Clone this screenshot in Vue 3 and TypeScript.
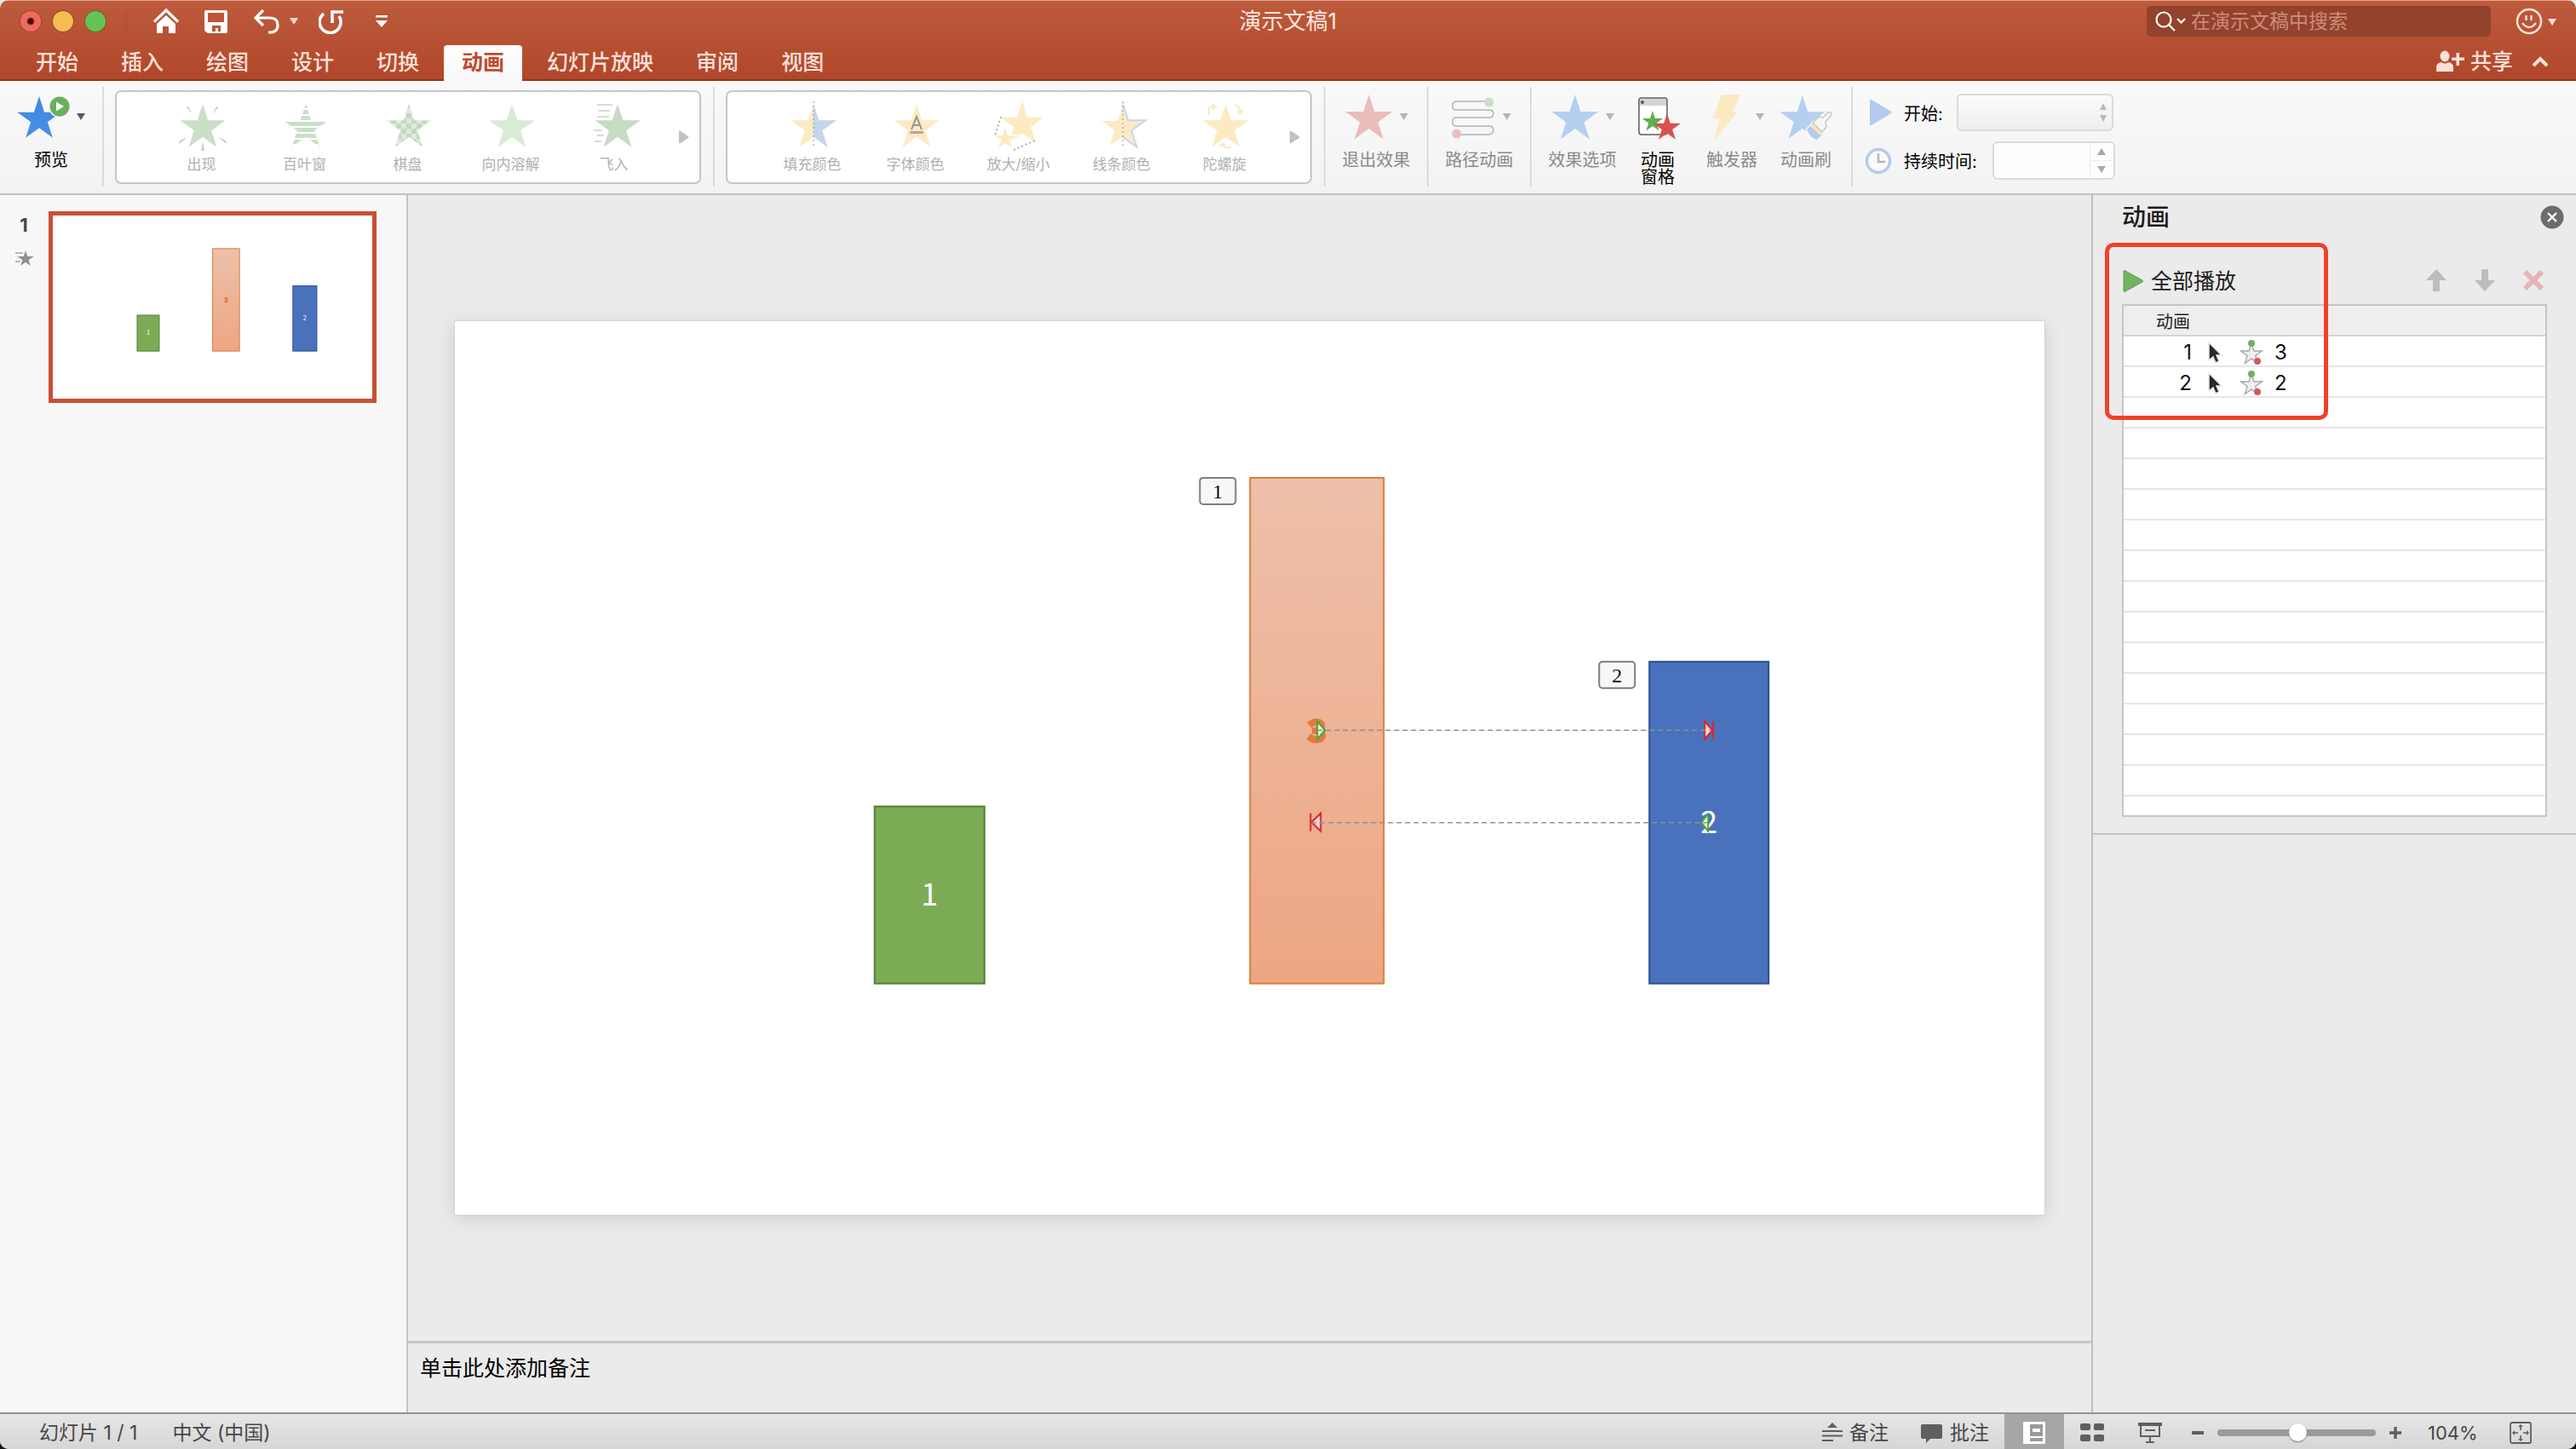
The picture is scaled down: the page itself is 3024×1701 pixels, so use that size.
<script setup lang="ts">
import { ref } from 'vue'

interface Bar {
  label: string
  x: number
  y: number
  w: number
  h: number
  fill: string
  stroke: string
  color: string
  size: number
  weight: number
  outline: number
  labelY: number
}

const tabs = ['开始', '插入', '绘图', '设计', '切换', '动画', '幻灯片放映', '审阅', '视图']
const activeTab = ref('动画')
const search = ref('')
const duration = ref('')
const zoom = ref(51)

const entrance = [
  { kind: 'appear', label: '出现' },
  { kind: 'blinds', label: '百叶窗' },
  { kind: 'checker', label: '棋盘' },
  { kind: 'dissolve', label: '向内溶解' },
  { kind: 'fly', label: '飞入' },
]

const emphasis = [
  { kind: 'fill', label: '填充颜色' },
  { kind: 'font', label: '字体颜色' },
  { kind: 'scale', label: '放大/缩小' },
  { kind: 'line', label: '线条颜色' },
  { kind: 'spin', label: '陀螺旋' },
]

const galleries = [
  { name: '进入效果', items: entrance },
  { name: '强调效果', items: emphasis },
]

const steps = [
  { order: 1, target: '3' },
  { order: 2, target: '2' },
]

const bars: Bar[] = [
  { label: '1', x: 493, y: 570, w: 129, h: 208, fill: '#7cab55', stroke: '#507e32', color: '#ffffff', size: 36, weight: 400, outline: 0, labelY: 686 },
  { label: '3', x: 934, y: 184, w: 157, h: 594, fill: 'url(#peach)', stroke: '#d97c3c', color: '#e07c42', size: 36, weight: 900, outline: 3, labelY: 494 },
  { label: '2', x: 1403, y: 400, w: 140, h: 378, fill: '#4a72bc', stroke: '#2c4f8c', color: '#ffffff', size: 36, weight: 400, outline: 0, labelY: 601 },
]

function star(cx: number, cy: number, r: number): string {
  const points: string[] = []
  for (let i = 0; i < 10; i++) {
    const radius = i % 2 === 0 ? r : r * 0.382
    const angle = (Math.PI / 5) * i - Math.PI / 2
    points.push(`${(cx + radius * Math.cos(angle)).toFixed(2)},${(cy + radius * Math.sin(angle)).toFixed(2)}`)
  }
  return points.join(' ')
}
</script>

<template>
  <div class="window">
    <svg class="defs" aria-hidden="true">
      <defs>
        <linearGradient id="peach" x1="0" y1="0" x2="0" y2="1">
          <stop offset="0" stop-color="#eec0aa" />
          <stop offset="1" stop-color="#eda683" />
        </linearGradient>
        <linearGradient id="azure" x1="0" y1="0" x2="0" y2="1">
          <stop offset="0" stop-color="#3f86df" />
          <stop offset="1" stop-color="#4a90e8" />
        </linearGradient>
        <pattern id="stripes" width="8" height="7" patternUnits="userSpaceOnUse">
          <rect width="8" height="5" fill="#cadfc8" />
        </pattern>
        <pattern id="checks" width="12" height="12" patternUnits="userSpaceOnUse">
          <rect width="12" height="12" fill="#dfeadd" />
          <rect width="6" height="6" fill="#c3d8c1" />
          <rect x="6" y="6" width="6" height="6" fill="#c3d8c1" />
        </pattern>
        <clipPath id="right-half"><rect x="33" y="0" width="31" height="64" /></clipPath>
      </defs>
    </svg>

    <header class="header">
      <div class="title-row">
        <div class="quick">
          <button class="light close" aria-label="关闭"></button>
          <button class="light mini" aria-label="最小化"></button>
          <button class="light full" aria-label="全屏"></button>
          <i class="quick-sep"></i>
          <button class="q-home" aria-label="主页">
            <svg width="30" height="30" viewBox="0 0 30 30">
              <path d="M1 15.500 15 2l14 13.500" fill="none" stroke="#fff" stroke-width="3.200" />
              <path d="M15 8 4 18v11h7v-8h7v8h8V18z" fill="#fff" />
            </svg>
          </button>
          <button class="q-save" aria-label="保存">
            <svg width="30" height="30" viewBox="0 0 30 30">
              <path fill="#fff" fill-rule="evenodd" d="M3 2h23q2 0 2 2v23q0 2-2 2H5l-4-3V4q0-2 2-2zm2 3v11h19V5zm5 15v7h4v-4h3v4h3v-7z" />
            </svg>
          </button>
          <button class="q-undo" aria-label="撤消">
            <svg width="30" height="30" viewBox="0 0 30 30">
              <path d="M11 2 2 11l9 9M3 11h16q9 0 9 8.500T19 28h-2" fill="none" stroke="#fff" stroke-width="3.200" />
            </svg>
          </button>
          <button class="q-caret" aria-label="撤消列表">
            <svg width="10" height="10" viewBox="0 0 10 10"><path d="M0 1h10L5 9z" fill="#f3d5cc" /></svg>
          </button>
          <button class="q-redo" aria-label="重复">
            <svg width="30" height="30" viewBox="0 0 30 30">
              <path d="M6 6a12.500 12.500 0 1 0 18 3" fill="none" stroke="#fff" stroke-width="3.600" />
              <path d="M16 17V4h13" fill="none" stroke="#fff" stroke-width="3.600" />
            </svg>
          </button>
          <button class="q-more" aria-label="自定义快速访问工具栏">
            <svg width="16" height="16" viewBox="0 0 16 16"><path d="M1 1h14v2.500H1zM1 7h14l-7 8z" fill="#fff" /></svg>
          </button>
        </div>
        <h1 class="doc-title">演示文稿1</h1>
        <div class="title-right">
          <label class="search">
            <svg width="36" height="26" viewBox="0 0 36 26" fill="none" stroke="#fff" stroke-width="2.200">
              <circle cx="10" cy="11" r="8.500" /><path d="m16 17 7 7" /><path d="m26 10 4.500 4.500L35 10" />
            </svg>
            <input v-model="search" type="search" placeholder="在演示文稿中搜索" aria-label="在演示文稿中搜索" />
          </label>
          <button class="smiley" aria-label="反馈">
            <svg width="50" height="32" viewBox="0 0 50 32">
              <circle cx="17" cy="16" r="14" fill="none" stroke="#fbe0d8" stroke-width="2.600" />
              <path d="M13.500 9v6M19.500 9v6M9 18q8 10 16 0" fill="none" stroke="#fbe0d8" stroke-width="2.400" />
              <path d="M39 13h10l-5 8z" fill="#fbe0d8" />
            </svg>
          </button>
        </div>
      </div>
      <nav class="tabs">
        <button
          v-for="tab in tabs"
          :key="tab"
          class="tab"
          :class="{ active: tab === activeTab }"
          @click="activeTab = tab"
        >{{ tab }}</button>
        <span class="grow"></span>
        <button class="share">
          <svg width="34" height="26" viewBox="0 0 34 26" fill="#fbe0d8">
            <ellipse cx="10" cy="7" rx="5.500" ry="6.500" /><path d="M0 25v-5q0-5 6-6 4 3 8 0 6 1 6 6v5zM18 8.500h5.500V3H27v5.500h6V12h-6v6h-3.500v-6H18z" />
          </svg>
          共享
        </button>
        <button class="fold" aria-label="折叠功能区">
          <svg width="20" height="14" viewBox="0 0 20 14"><path d="m2 12 8-8 8 8" fill="none" stroke="#fbe0d8" stroke-width="4" /></svg>
        </button>
      </nav>
    </header>

    <section class="ribbon">
      <button class="tool preview">
        <span class="tool-icon">
          <svg width="64" height="56" viewBox="0 0 64 56">
            <polygon :points="star(26, 31, 27)" fill="url(#azure)" />
            <circle cx="50" cy="16" r="13" fill="#f7f7f7" />
            <circle cx="50" cy="16" r="11.500" fill="#6bb05c" />
            <path d="M46 10.500v11l9-5.500z" fill="#fff" />
          </svg>
          <svg width="12" height="10" viewBox="0 0 12 10"><path d="M1 1h10L6 9z" fill="#5a5a5a" /></svg>
        </span>
        预览
      </button>
      <i class="sep"></i>

      <template v-for="gallery in galleries" :key="gallery.name">
        <div class="gallery" role="group" :aria-label="gallery.name">
          <button v-for="item in gallery.items" :key="item.kind" class="effect">
            <svg width="64" height="64" viewBox="0 0 64 64">
              <template v-if="item.kind === 'appear'">
                <polygon :points="star(33, 35, 28)" fill="#c9e0c6" />
                <path d="m14 11 2-1 5 9zM51 11l-2-1-4 9zM5 54l1-4 9-4zM61 54l-1-4-9-4zM31 62h4l-2-11z" fill="#bfd0bd" />
              </template>
              <polygon v-else-if="item.kind === 'blinds'" :points="star(33, 35, 28)" fill="url(#stripes)" />
              <polygon v-else-if="item.kind === 'checker'" :points="star(33, 35, 28)" fill="url(#checks)" />
              <polygon v-else-if="item.kind === 'dissolve'" :points="star(33, 35, 28)" fill="#d9ebd7" />
              <template v-else-if="item.kind === 'fly'">
                <polygon :points="star(36, 35, 28)" fill="#c6dcc4" />
                <path d="M12 8h18M13 15h14M12 22h14M8 38h10M12 44h8M9 51h8" stroke="#d5dcd4" stroke-width="2" />
              </template>
              <template v-else-if="item.kind === 'fill'">
                <polygon :points="star(33, 35, 28)" fill="#fcebc2" />
                <polygon :points="star(33, 35, 28)" fill="#c4d5ef" clip-path="url(#right-half)" />
                <path d="M33 4v54" stroke="#8f8f8f" stroke-dasharray="2 3" />
              </template>
              <template v-else-if="item.kind === 'font'">
                <polygon :points="star(33, 35, 28)" fill="#fcebc2" />
                <path d="m27 37 6-15 6 15M29 32h8" fill="none" stroke="#9a9290" stroke-width="2" />
                <path d="M25 39h16v3H25z" fill="#b9a59c" />
              </template>
              <template v-else-if="item.kind === 'scale'">
                <polygon :points="star(36, 31, 27)" fill="#fcebc2" />
                <polygon :points="star(16, 48, 16)" fill="#fff" />
                <polygon :points="star(16, 48, 13)" fill="#fcebc2" />
                <path d="M11 22 4 45M26 61l25-11" fill="none" stroke="#a9a9a9" stroke-width="2" stroke-dasharray="2 3" />
              </template>
              <template v-else-if="item.kind === 'line'">
                <polygon :points="star(33, 35, 26)" fill="#fcebc2" />
                <polygon :points="star(33, 35, 28)" fill="none" stroke="#c4d5ef" stroke-width="2" clip-path="url(#right-half)" />
                <path d="M33 4v54" stroke="#8f8f8f" stroke-dasharray="2 3" />
              </template>
              <template v-else>
                <polygon :points="star(33, 35, 28)" fill="#fcebc2" />
                <path d="M13 20v-7q0-3 8-3l-4-3m4 3-4 4M43 9q7-1 7 9l-4-3m4 3 3-4M39 58q-10 1-10-4l-3 3m3-3 4 1" fill="none" stroke="#f7e8c8" stroke-width="2" />
              </template>
            </svg>
            <span>{{ item.label }}</span>
          </button>
          <button class="gallery-more" aria-label="更多">
            <svg width="12" height="16" viewBox="0 0 12 16"><path d="M0 2q0-2 2-1l9 6q1 1 0 2l-9 6q-2 1-2-1z" fill="#c2c2c2" /></svg>
          </button>
        </div>
        <i class="sep"></i>
      </template>

      <button class="tool dim">
        <span class="tool-icon">
          <svg width="60" height="56" viewBox="0 0 60 56"><polygon :points="star(30, 31, 29)" fill="#ebbcbc" /></svg>
          <svg width="12" height="10" viewBox="0 0 12 10"><path d="M1 1h10L6 9z" fill="#b5b5b5" /></svg>
        </span>
        退出效果
      </button>
      <i class="sep"></i>
      <button class="tool dim">
        <span class="tool-icon">
          <svg width="60" height="56" viewBox="0 0 60 56">
            <path d="M48 10H12q-5 0-5 5t5 5h38q5 0 5 4.500T50 29H12q-5 0-5 5t5 5h38q5 0 5 4.500T50 49H12" fill="none" stroke="#b3b3b3" stroke-width="1.500" />
            <circle cx="50" cy="11" r="5.500" fill="#c9dfc6" /><circle cx="12" cy="48" r="5.500" fill="#e6c0c0" />
          </svg>
          <svg width="12" height="10" viewBox="0 0 12 10"><path d="M1 1h10L6 9z" fill="#b5b5b5" /></svg>
        </span>
        路径动画
      </button>
      <i class="sep"></i>
      <button class="tool dim">
        <span class="tool-icon">
          <svg width="60" height="56" viewBox="0 0 60 56"><polygon :points="star(30, 31, 29)" fill="#b5cff1" /></svg>
          <svg width="12" height="10" viewBox="0 0 12 10"><path d="M1 1h10L6 9z" fill="#b5b5b5" /></svg>
        </span>
        效果选项
      </button>
      <button class="tool narrow">
        <span class="tool-icon">
          <svg width="60" height="56" viewBox="0 0 60 56">
            <rect x="8" y="6" width="33" height="43" rx="3" fill="#fff" stroke="#5c5c5c" stroke-width="1.500" />
            <path d="M9 8q0-1 2-1h27q2 0 2 1v7H9z" fill="#d4d4d4" /><circle cx="12" cy="11" r="2" fill="#555" />
            <polygon :points="star(24, 34, 13)" fill="#5fae4f" /><polygon :points="star(41, 41, 17)" fill="#d8504f" />
          </svg>
        </span>
        动画<br />窗格
      </button>
      <button class="tool trigger dim">
        <span class="tool-icon">
          <svg width="60" height="56" viewBox="0 0 60 56"><path d="M26 2h22l-9 20h6L17 56l7-26h-8z" fill="#fbeac0" /></svg>
          <svg width="12" height="10" viewBox="0 0 12 10"><path d="M1 1h10L6 9z" fill="#b5b5b5" /></svg>
        </span>
        触发器
      </button>
      <button class="tool narrow dim">
        <span class="tool-icon">
          <svg width="64" height="56" viewBox="0 0 64 56">
            <polygon :points="star(28, 31, 28)" fill="#b5cff1" />
            <path d="m31 43 15-15 12 13-15 15z" fill="#f7f7f7" />
            <path d="m33 43 6-6 12 12-6 6q-7-1-12-12z" fill="#b3cdec" />
            <path d="m37 39 4-4 11 12-3 3z" fill="#fbe2bd" />
            <path d="m40 35 7-7 5 1 6-6q4-1 4 3l-7 8 1 6-5 6z" fill="#f6f6f6" stroke="#c5c5c5" stroke-width="1.500" />
          </svg>
        </span>
        动画刷
      </button>
      <i class="sep sep-last"></i>

      <form class="timing" @submit.prevent>
        <div class="timing-row">
          <svg width="32" height="32" viewBox="0 0 32 32"><path d="M6 2q0-2 2-1l23 14q1 1 0 2L8 31q-2 1-2-1z" fill="#b3cbef" /></svg>
          <label for="start">开始:</label>
          <div class="select-wrap">
            <select id="start" disabled><option></option></select>
            <svg width="10" height="24" viewBox="0 0 10 24"><path d="M5 1l4 8H1zM5 23l4-8H1z" fill="#b9b9b9" /></svg>
          </div>
        </div>
        <div class="timing-row">
          <svg width="32" height="32" viewBox="0 0 32 32">
            <circle cx="16" cy="16" r="13.500" fill="#fafafa" stroke="#b3cbef" stroke-width="3.400" /><path d="M16 7v10h8" fill="none" stroke="#b5b5b5" stroke-width="2.500" />
          </svg>
          <label for="duration">持续时间:</label>
          <div class="spin">
            <input id="duration" v-model="duration" type="text" />
            <div class="spin-buttons">
              <button type="button" aria-label="增加"><svg width="10" height="9" viewBox="0 0 10 9"><path d="M5 0l5 8H0z" fill="#a9a9a9" /></svg></button>
              <button type="button" aria-label="减少"><svg width="10" height="9" viewBox="0 0 10 9"><path d="M5 8l5-8H0z" fill="#a9a9a9" /></svg></button>
            </div>
          </div>
        </div>
      </form>
    </section>

    <main class="work">
      <aside class="thumbs">
        <div class="thumb-info">
          <strong>1</strong>
          <svg width="24" height="20" viewBox="0 0 24 20">
            <polygon :points="star(14, 11, 10)" fill="#8f8f8f" /><path d="M2 4h9M2 14h6" stroke="#a5a5a5" stroke-width="1.500" />
          </svg>
        </div>
        <button class="thumb" aria-label="幻灯片 1">
          <svg viewBox="0 -8 1867 1062" preserveAspectRatio="none">
            <g v-for="bar in bars" :key="bar.label">
              <rect :x="bar.x" :y="bar.y" :width="bar.w" :height="bar.h" :fill="bar.fill" :stroke="bar.stroke" stroke-width="5" />
              <text :x="bar.x + bar.w / 2" :y="bar.labelY" :fill="bar.color" :font-size="bar.size" :font-weight="bar.weight" :stroke="bar.color" :stroke-width="bar.outline" text-anchor="middle">{{ bar.label }}</text>
            </g>
          </svg>
        </button>
      </aside>

      <section class="editor">
        <div class="canvas">
          <svg class="slide" viewBox="0 0 1867 1050">
            <g v-for="bar in bars" :key="bar.label">
              <rect :x="bar.x" :y="bar.y" :width="bar.w" :height="bar.h" :fill="bar.fill" :stroke="bar.stroke" stroke-width="2" />
              <text :x="bar.x + bar.w / 2" :y="bar.labelY" :fill="bar.color" :font-size="bar.size" :font-weight="bar.weight" :stroke="bar.color" :stroke-width="bar.outline" text-anchor="middle">{{ bar.label }}</text>
            </g>
            <g stroke-width="2" stroke-linejoin="miter">
              <path d="M1013 470v21l9-10.500z" fill="#f0fae8" stroke="#4ba52e" />
              <path d="M1468 470v21l9-10.500zM1478 470v21" fill="#f6d4d6" stroke="#d8262c" />
              <path d="M1017 578v21l-11-10.500zM1005 578v21" fill="#f6d4d6" stroke="#d8262c" />
              <path d="M1472 579v20l-8-10z" fill="#f0fae8" stroke="#4ba52e" />
              <path d="M1013 480.500h462M1006 589h465" stroke="#8d9191" stroke-width="1.600" stroke-dasharray="6 4" />
            </g>
            <g class="order">
              <rect x="875" y="184" width="42" height="31" rx="4" /><text x="896" y="208">1</text>
              <rect x="1344" y="400" width="42" height="31" rx="4" /><text x="1365" y="424">2</text>
            </g>
          </svg>
        </div>
        <div class="notes">单击此处添加备注</div>
      </section>

      <aside class="pane">
        <div class="pane-body">
          <div class="pane-head">
            <h2>动画</h2>
            <button aria-label="关闭窗格">
              <svg width="28" height="28" viewBox="0 0 28 28"><circle cx="14" cy="14" r="13.500" fill="#6c6c6c" /><path d="m9 9 10 10M19 9 9 19" stroke="#fff" stroke-width="2.400" /></svg>
            </button>
          </div>
          <div class="pane-tools">
            <button class="play">
              <svg width="24" height="28" viewBox="0 0 24 28"><path d="M1 2q0-1 2 0l20 11q1 1 0 2L3 26q-2 1-2 0z" fill="#72b262" stroke="#5da04d" /></svg>
              全部播放
            </button>
            <span class="grow"></span>
            <button aria-label="上移"><svg width="24" height="28" viewBox="0 0 24 28"><path d="M12 1 0 14h8v13h8V14h8z" fill="#bdbdbd" /></svg></button>
            <button aria-label="下移"><svg width="24" height="28" viewBox="0 0 24 28"><path d="M12 27 0 14h8V1h8v13h8z" fill="#bdbdbd" /></svg></button>
            <button aria-label="删除"><svg width="24" height="28" viewBox="0 0 24 28"><path d="m2 4 20 20M22 4 2 24" stroke="#e8b3b5" stroke-width="6" /></svg></button>
          </div>
          <div class="list">
            <table>
              <thead><tr><th colspan="4">动画</th></tr></thead>
              <tbody>
                <tr v-for="step in steps" :key="step.order">
                  <td class="num">{{ step.order }}</td>
                  <td class="mouse">
                    <svg width="20" height="28" viewBox="0 0 20 28"><path d="M2 2v21l5-4 3 7 4-2-3-7h6z" fill="#2a2a2a" stroke="#e8e8e8" stroke-width="1.500" /></svg>
                  </td>
                  <td class="motion">
                    <svg width="28" height="32" viewBox="0 0 28 32">
                      <polygon :points="star(14, 18, 13)" fill="#eef1ef" stroke="#a5a8a6" stroke-width="1.400" />
                      <circle cx="14" cy="5" r="4" fill="#6eb25f" /><circle cx="21" cy="26" r="4" fill="#d25a60" />
                    </svg>
                  </td>
                  <td>{{ step.target }}</td>
                </tr>
              </tbody>
            </table>
          </div>
          <div class="callout"></div>
        </div>
      </aside>
    </main>

    <footer class="status">
      <span class="page">幻灯片 1 / 1</span>
      <span>中文 (中国)</span>
      <span class="grow"></span>
      <button class="s-notes">
        <svg width="24" height="26" viewBox="0 0 24 26" fill="#5f5f5f"><path d="m12 1 6 6H6zM0 10h24v2H0zM0 15.500h24v2H0zM0 21h13v2H0z" /></svg>备注
      </button>
      <button class="s-comments">
        <svg width="26" height="26" viewBox="0 0 26 26" fill="#5f5f5f"><path d="M2 3h21q2 0 2 2v13q0 2-2 2H11l-5 5v-5H2q-2 0-2-2V5q0-2 2-2z" /></svg>批注
      </button>
      <button class="s-normal" aria-label="普通视图">
        <svg width="28" height="28" viewBox="0 0 28 28">
          <rect x="1" y="1" width="26" height="26" rx="1" fill="#fff" /><path d="M9 4h15v14H9zM9 20h15v4H9z" fill="#9a9a9a" /><path d="M12 9h9v4h-9z" fill="#fff" />
        </svg>
      </button>
      <button class="s-sorter" aria-label="幻灯片浏览">
        <svg width="28" height="24" viewBox="0 0 28 24" fill="#5f5f5f"><rect y="1" width="12" height="8" rx="2" /><rect x="16" y="1" width="12" height="8" rx="2" /><rect y="14" width="12" height="8" rx="2" /><rect x="16" y="14" width="12" height="8" rx="2" /></svg>
      </button>
      <button class="s-show" aria-label="幻灯片放映">
        <svg width="28" height="26" viewBox="0 0 28 26" fill="none" stroke="#5f5f5f" stroke-width="2">
          <path d="M0 3h28" stroke-width="4" /><path d="M3 4v13h22V4M8 10h12M14 17v6M9 24h10" />
        </svg>
      </button>
      <button class="s-minus" aria-label="缩小"><svg width="16" height="16" viewBox="0 0 16 16"><path d="M1 8h14" stroke="#5f5f5f" stroke-width="4" /></svg></button>
      <input v-model="zoom" class="slider" type="range" min="0" max="100" aria-label="缩放" />
      <button class="s-plus" aria-label="放大"><svg width="16" height="16" viewBox="0 0 16 16"><path d="M1 8h14M8 1v14" stroke="#5f5f5f" stroke-width="3.500" /></svg></button>
      <button class="s-percent">104%</button>
      <button class="s-fit" aria-label="适应窗口">
        <svg width="26" height="26" viewBox="0 0 26 26" fill="none" stroke="#5f5f5f">
          <rect x="1" y="1" width="24" height="24" rx="2" stroke-width="1.800" />
          <path d="M13 10V4M13 16v6M10 13H4M16 13h6" stroke-width="1.600" />
          <path d="m10 6 3-3 3 3zM10 20l3 3 3-3zM6 10l-3 3 3 3zM20 10l3 3-3 3z" fill="#5f5f5f" stroke="none" />
        </svg>
      </button>
    </footer>
  </div>
</template>

<style>
html {
  background: linear-gradient(#e6e8e4 50%, #15171c 50%);
}
</style>

<style scoped>
.window {
  display: flex;
  flex-direction: column;
  min-height: 100vh;
  overflow: hidden;
  border-radius: 10px;
  background: #ebebeb;
  color: #1c1c1c;
  font-family: Inter, "Noto Sans CJK SC", sans-serif;
  font-size: 20px;
}
.window *,
.window {
  box-sizing: border-box;
}
svg {
  display: block;
  flex: none;
}
.defs {
  position: absolute;
  width: 0;
  height: 0;
}
button {
  padding: 0;
  border: 0;
  background: none;
  color: inherit;
  font: inherit;
  white-space: nowrap;
}
.grow {
  flex: 1;
}

.header {
  border-top: 1px solid #e3a797;
  background: linear-gradient(#bd5b3c, #b1462a);
  box-shadow: inset 0 -2px 0 #8e3520;
}
.title-row {
  display: grid;
  grid-template-columns: 1fr auto 1fr;
  align-items: center;
  height: 48px;
}
.quick {
  display: flex;
  align-items: center;
  padding-left: 24px;
}
.light {
  width: 24px;
  height: 24px;
  margin-right: 14px;
  border-radius: 50%;
  box-shadow: 0 0 0 1px #9a4630;
}
.close {
  background: radial-gradient(circle, #4d0b04 3px, #ee6a5f 5px);
}
.mini {
  background: #f5bd4f;
}
.full {
  background: #61c555;
}
.quick-sep {
  width: 1px;
  height: 28px;
  margin: 0 31px 0 10px;
  background: #a94c31;
}
.q-save,
.q-undo {
  margin-left: 29px;
}
.q-caret {
  margin-left: 12px;
}
.q-redo {
  margin-left: 24px;
}
.q-more {
  margin-left: 36px;
}
.doc-title {
  margin: 0;
  color: #fbe6df;
  font-size: 26px;
  font-weight: 400;
  line-height: 30px;
}
.title-right {
  display: flex;
  align-items: center;
  justify-content: flex-end;
  padding-right: 22px;
}
.search {
  display: flex;
  align-items: center;
  gap: 6px;
  width: 404px;
  height: 36px;
  margin-right: 28px;
  padding-left: 10px;
  border-radius: 5px;
  background: #93432d;
}
.search input {
  flex: 1;
  min-width: 0;
  height: 36px;
  padding: 0;
  border: 0;
  outline: 0;
  background: none;
  color: #fff;
  font: inherit;
  font-size: 23px;
}
.search input::placeholder {
  color: #cd8c79;
  opacity: 1;
}
.tabs {
  display: flex;
  align-items: center;
  height: 46px;
  padding: 0 32px 0 17px;
  color: #fbe0d8;
  font-size: 25px;
  font-weight: 500;
  line-height: 38px;
}
.tab {
  align-self: flex-end;
  height: 42px;
  margin: 0 4px;
  padding: 0 21px 3px;
  border-radius: 4px 4px 0 0;
}
.tab.active {
  background: linear-gradient(#fff, #f8f8f8);
  color: #c04a2b;
  font-weight: 700;
}
.share {
  display: flex;
  align-items: center;
  gap: 6px;
  margin-right: 22px;
}

.ribbon {
  display: flex;
  height: 134px;
  border-bottom: 2px solid #c2c2c2;
  background: linear-gradient(#f9f9f9, #f3f3f3);
}
.sep {
  flex: none;
  width: 2px;
  margin: 7px 0 8px;
  background: #dcdcdc;
}
.tool {
  width: 119px;
  padding-top: 14px;
  display: flex;
  flex-direction: column;
  align-items: center;
  flex: none;
  color: #000;
  line-height: 20px;
}
.preview {
  width: 120px;
}
.narrow {
  width: 58px;
}
.trigger {
  width: 116px;
}
.dim {
  color: #8a8a8a;
}
.tool-icon {
  display: flex;
  align-items: center;
  gap: 5px;
  margin-bottom: 13px;
}
.sep-last {
  margin-left: 24px;
}
.gallery {
  display: flex;
  align-items: center;
  flex: none;
  width: 688px;
  height: 110px;
  margin: 11px 14px 0 13px;
  padding-left: 39px;
  border: 2px solid #c6c6c6;
  border-radius: 7px;
  background: #fff;
}
.effect {
  display: flex;
  flex-direction: column;
  align-items: center;
  width: 121px;
  padding-bottom: 2px;
  color: #b0b0b0;
  font-size: 17px;
  line-height: 24px;
}
.effect span {
  margin-top: 2px;
}
.gallery-more {
  margin-left: 16px;
}
.timing {
  display: flex;
  flex-direction: column;
  gap: 12px;
  padding: 15px 0 0 14px;
  color: #000;
}
.timing-row {
  display: flex;
  align-items: center;
}
.timing-row label {
  margin: 0 16px 0 14px;
}
.select-wrap {
  position: relative;
}
.select-wrap select {
  display: block;
  width: 184px;
  height: 44px;
  border: 2px solid #d0d0d0;
  border-radius: 6px;
  appearance: none;
  background: linear-gradient(#fcfcfc, #ececec);
}
.select-wrap svg {
  position: absolute;
  top: 10px;
  right: 7px;
}
.spin {
  display: flex;
  width: 144px;
  height: 45px;
  margin-left: 2px;
  border: 2px solid #dadada;
  border-radius: 6px;
  background: #fdfdfd;
}
.spin input {
  flex: 1;
  min-width: 0;
  padding: 0 8px;
  border: 0;
  outline: 0;
  background: none;
  font: inherit;
}
.spin-buttons {
  display: flex;
  flex-direction: column;
  width: 28px;
  border-left: 1px solid #ececec;
}
.spin-buttons button {
  display: flex;
  flex: 1;
  align-items: center;
  justify-content: center;
}
.spin-buttons button + button {
  border-top: 1px solid #ececec;
}

.work {
  display: flex;
  flex: 1;
}
.thumbs {
  display: flex;
  align-items: flex-start;
  flex: none;
  width: 479px;
  padding: 19px 0 0 17px;
  border-right: 2px solid #c4c4c4;
  background: #f7f7f7;
}
.thumb-info {
  display: flex;
  flex-direction: column;
  align-items: center;
  gap: 17px;
  width: 22px;
  margin-right: 18px;
  padding-top: 4px;
  color: #454545;
  font-size: 22px;
  line-height: 24px;
}
.thumb {
  width: 385px;
  border: 5px solid #c94f33;
  background: #fff;
}
.thumb svg {
  width: 100%;
  height: 215px;
}
.thumb text,
.slide text {
  font-family: "Noto Sans CJK SC", sans-serif;
}
.editor {
  display: flex;
  flex: 1;
  flex-direction: column;
  min-width: 0;
}
.canvas {
  display: flex;
  flex: 1;
  align-items: center;
  justify-content: center;
  padding: 0 55px;
}
.slide {
  width: 100%;
  background: #fff;
  box-shadow: 0 0 0 1px #d4d4d4, 0 4px 20px #c9c9c9;
}
.order rect {
  fill: #f7f7f7;
  stroke: #7d7d7d;
  stroke-width: 2px;
}
.slide .order text {
  fill: #111;
  font-family: "Liberation Serif", serif;
  font-size: 24px;
  text-anchor: middle;
}
.notes {
  height: 84px;
  padding: 15px 14px;
  border-top: 3px solid #c6c6c6;
  color: #000;
  font-size: 25px;
  line-height: 28px;
}

.pane {
  flex: none;
  width: 569px;
  border-left: 2px solid #bebebe;
}
.pane-body {
  position: relative;
  padding: 11px 34px 19px;
  border-bottom: 2px solid #c4c4c4;
}
.pane-head {
  display: flex;
  align-items: center;
  justify-content: space-between;
  height: 30px;
  margin-right: -20px;
}
.pane-head h2 {
  margin: 0;
  font-size: 28px;
  font-weight: 500;
  line-height: 30px;
}
.pane-tools {
  display: flex;
  align-items: center;
  gap: 33px;
  height: 36px;
  margin: 41px 4px 10px 1px;
}
.play {
  display: flex;
  align-items: center;
  gap: 9px;
  padding-top: 1px;
  font-size: 25px;
  line-height: 30px;
}
.list {
  height: 602px;
  overflow: hidden;
  border: 2px solid #c6c6c6;
  background: repeating-linear-gradient(#fff 0 34px, #e6e6e6 34px 36px);
}
.list table {
  width: 100%;
  border-collapse: collapse;
}
.list th {
  height: 36px;
  padding: 2px 0 0 38px;
  background: #eee;
  box-shadow: inset 0 -2px 0 #d4d4d4;
  color: #222;
  font-size: 20px;
  font-weight: 400;
  line-height: 30px;
  text-align: left;
}
.list td {
  height: 36px;
  padding: 2px 0 0;
  color: #111;
  font-size: 24px;
  line-height: 32px;
}
.list .num {
  width: 80px;
  text-align: right;
}
.list .mouse {
  width: 56px;
  padding-left: 18px;
}
.list .motion {
  width: 41px;
}
.callout {
  position: absolute;
  top: 56px;
  left: 14px;
  width: 262px;
  height: 208px;
  border: 5px solid #ef412b;
  border-radius: 10px;
  pointer-events: none;
}

.status {
  display: flex;
  align-items: center;
  height: 43px;
  padding: 2px 52px 0 46px;
  border-top: 2px solid #929292;
  background: linear-gradient(#e6e6e6, #d6d6d6);
  color: #474747;
  font-size: 23px;
  line-height: 30px;
}
.page {
  margin-right: 41px;
}
.s-notes,
.s-comments {
  display: flex;
  align-items: center;
  gap: 8px;
}
.s-comments {
  margin: 0 18px 0 38px;
}
.s-normal {
  display: flex;
  align-items: center;
  justify-content: center;
  align-self: stretch;
  width: 70px;
  margin-top: -2px;
  padding-top: 2px;
  background: #a6a6a6;
}
.s-sorter {
  margin: 0 40px 0 19px;
}
.s-minus {
  margin: 0 15px 0 34px;
}
.slider {
  width: 186px;
  height: 24px;
  margin: 0;
  appearance: none;
  background: none;
}
.slider::-webkit-slider-runnable-track {
  height: 8px;
  border-radius: 4px;
  background: #9a9a9a;
}
.slider::-webkit-slider-thumb {
  width: 21px;
  height: 21px;
  margin-top: -7px;
  appearance: none;
  border-radius: 50%;
  background: #fff;
  box-shadow: 0 1px 2px #777;
}
.s-plus {
  margin: 0 30px 0 15px;
}
.s-percent {
  width: 58px;
  font-size: 22px;
}
.s-fit {
  margin-left: 38px;
}
</style>
